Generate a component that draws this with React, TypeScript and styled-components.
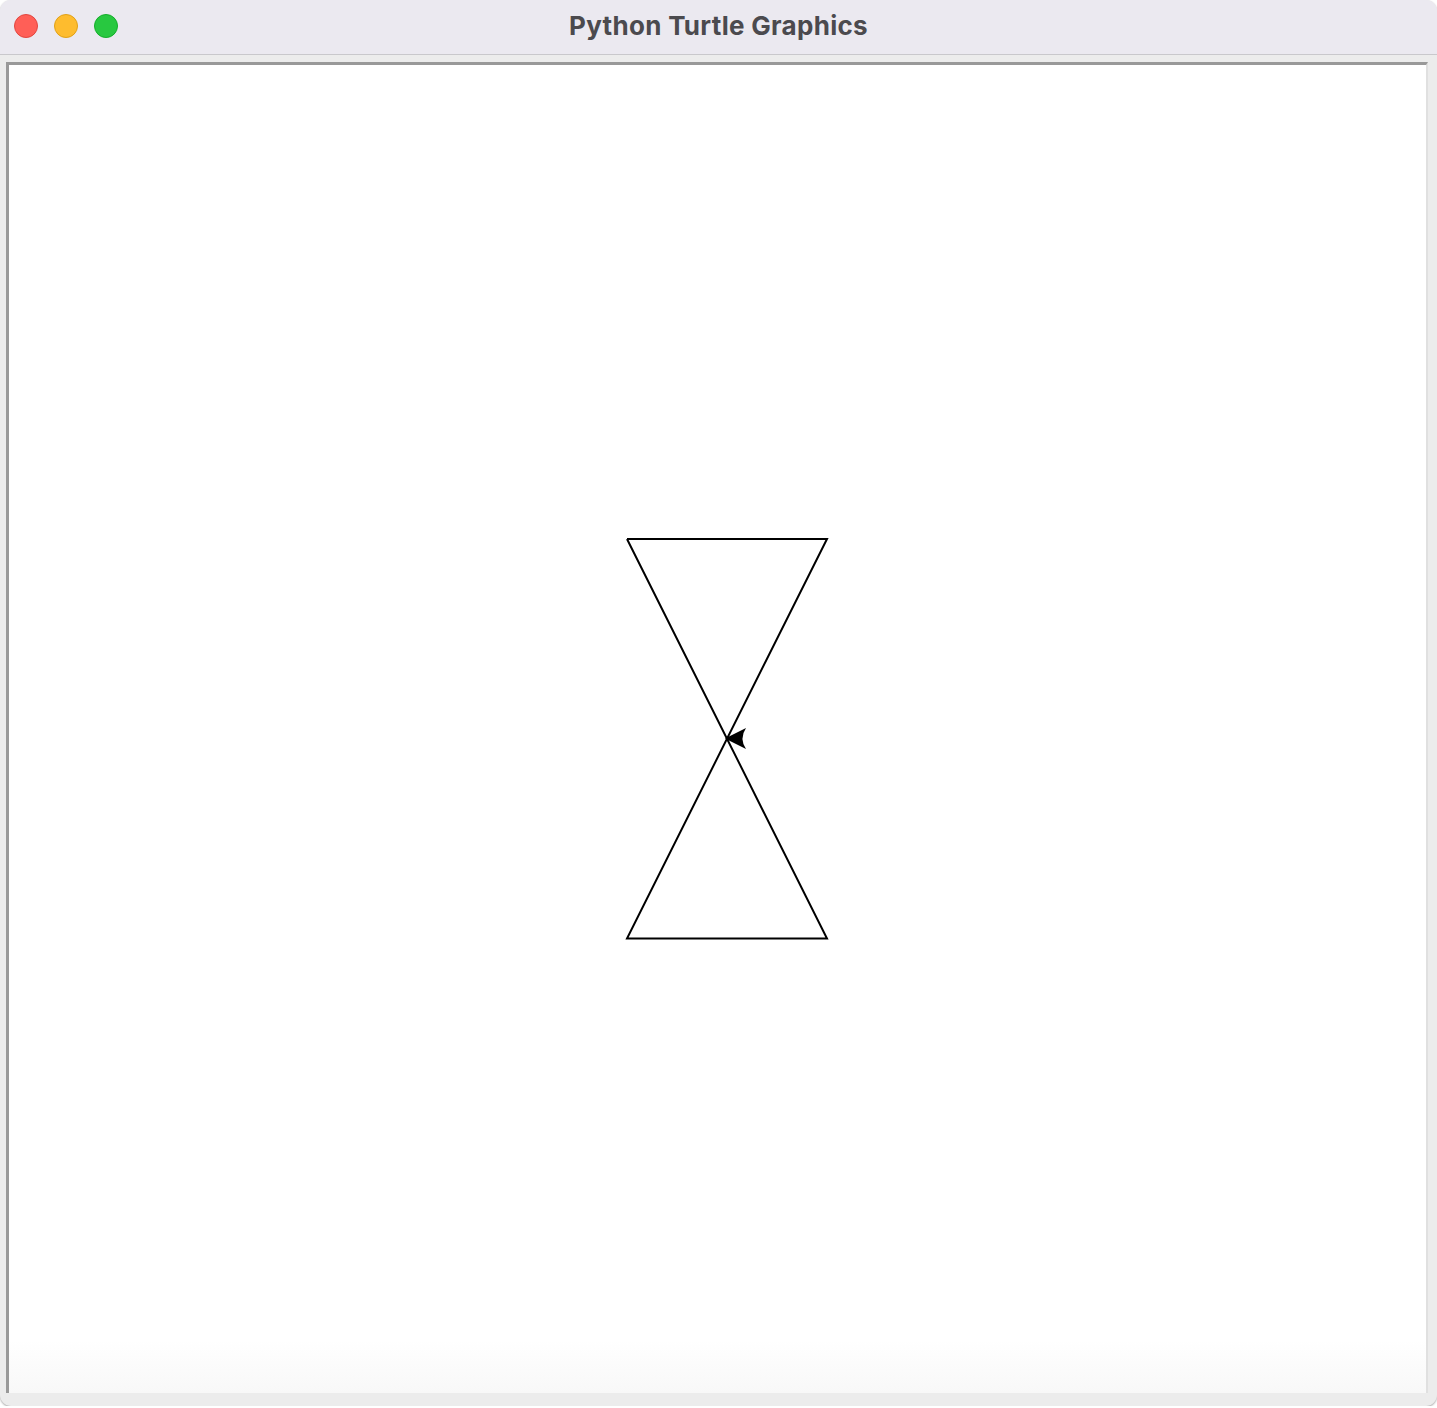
import React from "react";
import styled, { createGlobalStyle } from "styled-components";

const Global = createGlobalStyle`
  html, body { margin: 0; padding: 0; background: #ffffff; }
  body { font-family: Inter, "Noto Sans", "DejaVu Sans", sans-serif; }
`;

const Window = styled.div`
  width: 1437px;
  height: 1406px;
  display: flex;
  flex-direction: column;
  background: #ececec;
  border-radius: 11px;
  overflow: hidden;
  box-shadow: 0 1px 2px rgba(0, 0, 0, 0.35);
`;

const TitleBar = styled.div`
  height: 54px;
  flex: 0 0 54px;
  background: #ebe9f0;
  border-bottom: 1px solid #c9c8cc;
  display: flex;
  align-items: center;
  justify-content: center;
  position: relative;
`;

const Lights = styled.div`
  position: absolute;
  left: 14px;
  top: 14px;
  display: flex;
  gap: 16px;
`;

const Light = styled.span<{ $fill: string; $edge: string }>`
  width: 24px;
  height: 24px;
  border-radius: 50%;
  box-sizing: border-box;
  background: ${(p) => p.$fill};
  border: 1px solid ${(p) => p.$edge};
`;

const Title = styled.div`
  font-family: Inter, "Open Sans", sans-serif;
  font-weight: 700;
  font-size: 26px;
  color: #4b4a4e;
  letter-spacing: 0.3px;
  margin-top: -4px;
`;

const Content = styled.div`
  flex: 1;
  padding: 7px 9px 13px 6px;
  display: flex;
`;

const Frame = styled.div`
  flex: 1;
  border-top: 3px solid #999999;
  border-left: 3px solid #999999;
  border-right: 2px solid #e0e0e0;
  background: linear-gradient(to bottom, #ffffff 0%, #ffffff 96%, #f8f8f8 100%);
  display: flex;
`;

const Canvas = styled.svg`
  width: 100%;
  height: 100%;
  display: block;
`;

export default function App() {
  const ox = 9;
  const oy = 65;
  const p = (x: number, y: number) => `${x - ox},${y - oy}`;
  return (
    <>
      <Global />
      <Window>
        <TitleBar>
          <Lights>
            <Light $fill="#ff5f57" $edge="#e2463f" />
            <Light $fill="#febc2e" $edge="#e1a116" />
            <Light $fill="#28c840" $edge="#14ae2a" />
          </Lights>
          <Title>Python Turtle Graphics</Title>
        </TitleBar>
        <Content>
          <Frame>
            <Canvas viewBox="0 0 1417 1326" preserveAspectRatio="xMinYMin meet">
              <polyline
                points={[p(627, 539), p(827, 539), p(627, 938.5), p(827, 938.5), p(627, 539)].join(" ")}
                fill="none"
                stroke="#000"
                strokeWidth={2}
                strokeLinejoin="miter"
              />
              <path
                d={`M ${p(725, 738.5)} L ${p(746, 728)} Q ${p(739, 738.5)} ${p(746, 749)} Z`}
                fill="#000"
              />
            </Canvas>
          </Frame>
        </Content>
      </Window>
    </>
  );
}
